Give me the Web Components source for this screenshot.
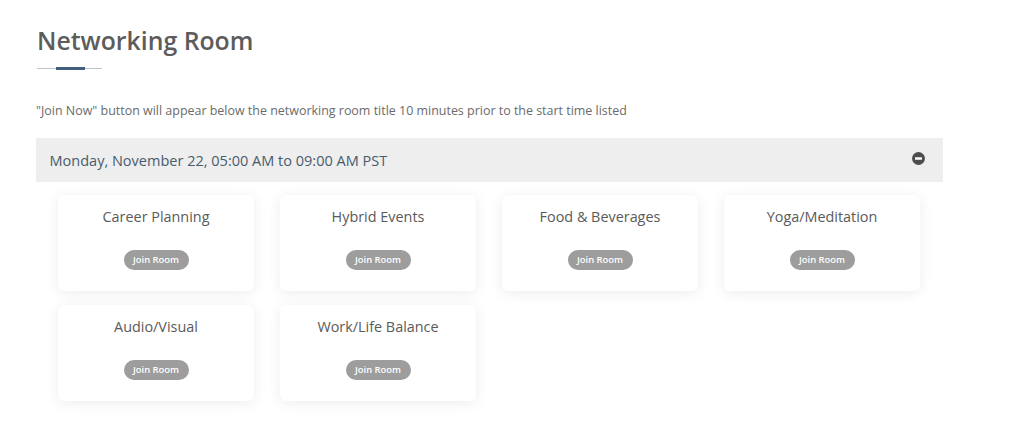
<!DOCTYPE html>
<html lang="en"><head><meta charset="utf-8"><title>Networking Room</title>
<style>
html,body{margin:0;background:#fff;font-family:"Open Sans","Noto Sans",sans-serif}
body{width:1024px;height:441px;overflow:hidden}
</style></head><body>
<networking-page>
  <section-title slot="title">Networking Room</section-title>
  <span slot="note">"Join Now" button will appear below the networking room title 10 minutes prior to the start time listed</span>
  <schedule-bar slot="bar">Monday, November 22, 05:00 AM to 09:00 AM PST</schedule-bar>
  <room-card>Career Planning</room-card>
  <room-card>Hybrid Events</room-card>
  <room-card>Food &amp; Beverages</room-card>
  <room-card>Yoga/Meditation</room-card>
  <room-card>Audio/Visual</room-card>
  <room-card>Work/Life Balance</room-card>
</networking-page>
<script>
function def(name, html){
  customElements.define(name, class extends HTMLElement{
    constructor(){super();this.attachShadow({mode:'open'}).innerHTML=html;}
  });
}
def('networking-page',`<style>
:host{display:block;box-sizing:border-box;width:907px;margin-left:36px;padding-top:23px}
.note{font-size:12.46px;line-height:18px;color:#6b6b6b;margin:0 0 18px 0}
.grid{display:grid;grid-template-columns:repeat(4,196px);column-gap:26px;row-gap:14px;padding:13px 0 0 22px}
</style>
<slot name="title"></slot>
<div class="note"><slot name="note"></slot></div>
<slot name="bar"></slot>
<div class="grid"><slot></slot></div>`);
def('section-title',`<style>
:host{display:block;padding-left:1px;margin-bottom:33px}
h1{margin:0;font-size:24.8px;line-height:34px;font-weight:600;color:#5c5c5c}
.rule{margin-top:11px;width:65px;height:1px;background:#bcc5cc;position:relative}
.rule i{position:absolute;left:19px;top:-1px;width:29px;height:3px;background:#40607e}
</style><h1><slot></slot></h1><div class="rule"><i></i></div>`);
def('schedule-bar',`<style>
:host{display:flex;align-items:center;justify-content:space-between;height:44px;box-sizing:border-box;background:#eeeeee;padding:0 18px 0 13.5px;color:#485c6d;font-size:14.52px}
svg{display:block;margin-top:-4px}
</style><span><slot></slot></span>
<svg width="13" height="13" viewBox="0 0 13 13" aria-hidden="true"><circle cx="6.5" cy="6.5" r="6.5" fill="#4d4d4d"/><rect x="3" y="5.3" width="7" height="2.4" rx=".5" fill="#fff"/></svg>`);
def('room-card',`<style>
:host{display:flex;flex-direction:column;align-items:center;box-sizing:border-box;height:96px;background:#fff;border-radius:6px;box-shadow:0 2px 14px rgba(0,0,0,.075);padding-top:12px}
.t{font-size:14.4px;line-height:20px;font-weight:500;color:#5a5a5a}
button{all:unset;margin-top:23px;width:65px;height:19.5px;border-radius:10px;background:#9d9d9d;color:#fff;font:600 9.4px/19.5px "Open Sans","Noto Sans",sans-serif;text-align:center}
</style><div class="t"><slot></slot></div><button>Join Room</button>`);
</script>
</body></html>
